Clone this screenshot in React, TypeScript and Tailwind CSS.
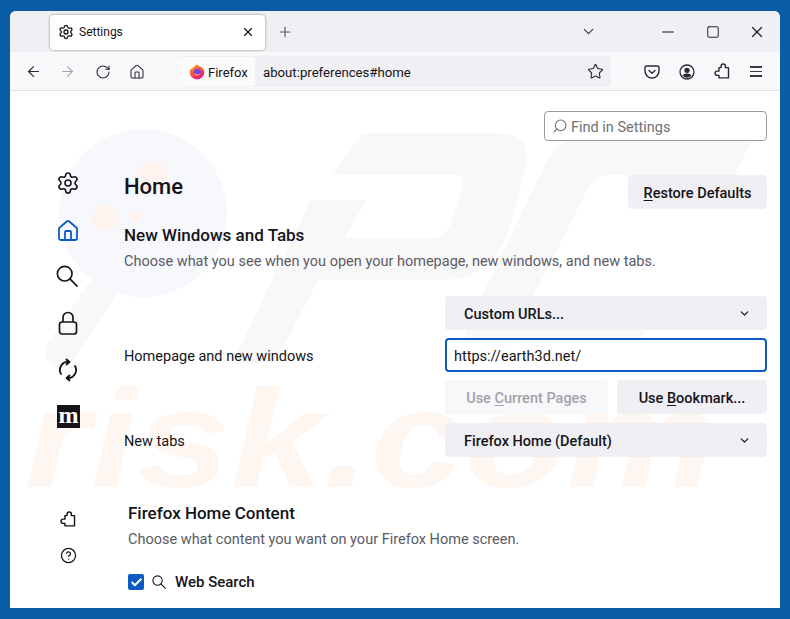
import { ArrowLeft, ArrowRight, ChevronDown, Minus, Plus, RotateCw, Search, Settings, Square, Star, X, House, Check, CircleHelp } from 'lucide-react'

function Puzzle({ className }: { className?: string }) {
  return (
    <svg className={className} viewBox="0 0 24 24" fill="none" stroke="currentColor" strokeWidth={2} strokeLinejoin="round">
      <path d="M11 7.5V5.5a3 3 0 0 1 6 0v2h4.5V22H8v-3.5H5.5a3 3 0 0 1 0-6H8v-5z" transform="translate(-1 -1)" />
    </svg>
  )
}

function SyncIcon({ className }: { className?: string }) {
  return (
    <svg className={className} viewBox="0 0 24 24" fill="none" stroke="currentColor" strokeWidth={1.8} strokeLinecap="round" strokeLinejoin="round">
      <path d="M5 16A8 8 0 0 1 12.5 4" />
      <path d="M19 8A8 8 0 0 1 11.5 20" />
      <path d="M10.5 1.5l3 2.5-3 2.5" fill="currentColor" />
      <path d="M13.5 22.5l-3-2.5 3-2.5" fill="currentColor" />
    </svg>
  )
}

function SearchGlass({ className }: { className?: string }) {
  return (
    <svg className={className} viewBox="0 0 24 24" fill="none" stroke="currentColor" strokeWidth={1.8} strokeLinecap="round">
      <circle cx="9.5" cy="9.5" r="8" />
      <path d="M15.5 15.5L23 23" />
    </svg>
  )
}

function FirefoxLogo() {
  return (
    <svg className="w-[16px] h-[16px]" viewBox="0 0 16 16">
      <defs>
        <linearGradient id="fx" x1="0" y1="0" x2="0.6" y2="1">
          <stop offset="0" stopColor="#ffb71f" />
          <stop offset="0.5" stopColor="#ff5a2c" />
          <stop offset="1" stopColor="#e31587" />
        </linearGradient>
      </defs>
      <path d="M8 15.5A7.2 7.2 0 0 1 .8 8.2C.8 6.6 1.3 5.2 2 4.2c.2.6.5 1 .8 1.2C3.4 3.6 5 3 5.5 2.6c1-.8 1.6-1.6 1.8-2.4 1 1.1 2 1.6 3.6 2.2 2.6 1 4.3 3.2 4.3 5.8A7.2 7.2 0 0 1 8 15.5z" fill="url(#fx)" />
      <circle cx="8.2" cy="8.2" r="3.5" fill="#7542e5" />
      <path d="M4.6 8.4c.3 2 1.8 3.2 3.6 3.2 1.7 0 3.2-1.2 3.5-2.9-.8 1.1-2 1.6-3.4 1.5-1.6-.1-3-.8-3.7-1.8z" fill="#ffa436" />
    </svg>
  )
}

// faint site watermark behind the settings page
function Watermark() {
  return (
    <div className="absolute inset-0 overflow-hidden pointer-events-none">
      <svg className="absolute inset-0 w-full h-full" viewBox="0 0 770 517">
        <path d="M90 202L50 262" stroke="#f8f8f9" strokeWidth="30" strokeLinecap="round" />
        <circle cx="133" cy="122" r="84" fill="#f6f8fb" />
        <circle cx="143" cy="86" r="16" fill="#fef3ef" />
        <circle cx="95" cy="127" r="13" fill="#fef3ef" />
        <circle cx="126" cy="126" r="6" fill="#fef3ef" />
        <g transform="translate(-10 -91)" fill="#f8f8f9">
          <path d="M362 133H495Q535 133 525 170L510 225Q495 280 440 280H318L275 363H232L311 200H367L344 238H430Q445 238 450 225L463 185Q465 175 455 175H333Z" />
          <path d="M755 133H600Q560 133 545 165L470 320Q455 363 500 363H628L650 322H530Q520 322 525 312L590 185Q596 175 610 175H735Z" />
        </g>
      </svg>
      <div className="absolute left-[15px] top-[278px] origin-left scale-x-[1.2] font-['Liberation_Sans',sans-serif] font-bold italic text-[140px] leading-none text-[#fef7f1]">risk.com</div>
    </div>
  )
}

function SelectBox({ label }: { label: string }) {
  return (
    <div className="h-[34px] rounded bg-[#f0f0f4] flex items-center justify-between pl-[19px] pr-[16px] text-[14.5px] font-medium text-[#15141a]">
      <span className="pt-[4px]">{label}</span>
      <ChevronDown className="w-[13px] h-[13px]" strokeWidth={2.2} />
    </div>
  )
}

export default function App() {
  return (
    <div className="w-[790px] h-[619px] bg-[#0a5ca6] pt-[11px] px-[10px] overflow-hidden font-['Roboto',sans-serif] text-[#15141a]">
      <div className="h-[597px] rounded-t-md overflow-hidden bg-white flex flex-col">
        {/* tab strip */}
        <div className="h-[41px] bg-[#f0f0f4] flex items-center pl-[40px] shrink-0">
          <div className="w-[215px] h-[35px] mt-[1px] bg-white rounded shadow-[0_0_3px_rgba(0,0,0,0.4)] flex items-center pl-[8px] pr-[10px]">
            <Settings className="w-[16px] h-[16px]" />
            <span className="ml-[5px] text-[12px] flex-1">Settings</span>
            <X className="w-[14px] h-[14px]" />
          </div>
          <Plus className="ml-[12px] w-[16px] h-[16px] text-[#55555a]" strokeWidth={1.6} />
          <ChevronDown className="ml-[287px] w-[17px] h-[17px] text-[#33333a]" strokeWidth={1.5} />
          <Minus className="ml-[62px] w-[18px] h-[18px]" strokeWidth={1.5} />
          <Square className="ml-[29px] w-[14px] h-[14px]" strokeWidth={1.6} />
          <X className="ml-[28px] w-[18px] h-[18px]" strokeWidth={1.5} />
        </div>

        {/* toolbar */}
        <div className="h-[39px] pt-[1px] bg-[#f9f9fb] border-b border-[#e0e0e6] flex items-center pl-[15px] shrink-0">
          <ArrowLeft className="w-[17px] h-[17px] text-[#2b2a33]" strokeWidth={1.6} />
          <ArrowRight className="ml-[17px] w-[17px] h-[17px] text-[#a5a5ab]" strokeWidth={1.6} />
          <RotateCw className="ml-[19px] w-[16px] h-[16px] text-[#2b2a33]" strokeWidth={1.6} />
          <House className="ml-[18px] w-[16px] h-[16px] text-[#2b2a33]" strokeWidth={1.6} />
          <div className="ml-[35px] w-[431px] h-[31px] bg-[#f0f0f4] rounded flex items-center">
            <div className="w-[75px] h-[29px] bg-[#fbfbfc] rounded flex items-center pl-[9px] gap-[3px] text-[13px]">
              <FirefoxLogo />
              <span className="pt-[2px]">Firefox</span>
            </div>
            <span className="ml-[8px] pt-[2px] text-[13.2px] flex-1">about:preferences#home</span>
            <Star className="mr-[7px] w-[17px] h-[17px] text-[#2b2a33]" strokeWidth={1.6} />
          </div>
          <svg className="ml-[33px] w-[16px] h-[16px] text-[#2b2a33]" viewBox="0 0 16 16" fill="none" stroke="currentColor" strokeWidth="1.4" strokeLinecap="round" strokeLinejoin="round">
            <path d="M2.5 2h11A1.5 1.5 0 0 1 15 3.5V7A7 7 0 0 1 1 7V3.5A1.5 1.5 0 0 1 2.5 2z" />
            <path d="M5 6.5l3 2.8 3-2.8" />
          </svg>
          <svg className="ml-[19px] w-[16px] h-[16px] text-[#2b2a33]" viewBox="0 0 16 16" fill="none">
            <circle cx="8" cy="8" r="7" stroke="currentColor" strokeWidth="1.3" />
            <circle cx="8" cy="6.3" r="2.6" fill="currentColor" />
            <path d="M3.6 11.5C4.8 10 6.3 9.6 8 9.6s3.2.4 4.4 1.9A6 6 0 0 1 8 13.8a6 6 0 0 1-4.4-2.3z" fill="currentColor" />
          </svg>
          <Puzzle className="ml-[19px] w-[17px] h-[17px] text-[#2b2a33]" />
          <div className="ml-[19px] w-[12px] flex flex-col gap-[3px]">
            <div className="h-[1.5px] bg-[#3a3a42]" />
            <div className="h-[1.5px] bg-[#3a3a42]" />
            <div className="h-[1.5px] bg-[#3a3a42]" />
          </div>
        </div>

        {/* page */}
        <div className="relative flex-1 overflow-hidden">
          <Watermark />
          <div className="relative h-full flex">
            <div className="w-[114px] shrink-0 pl-[46px] pt-[80px] flex flex-col text-[#15141a]">
              <Settings className="w-[24px] h-[24px]" strokeWidth={1.6} />
              <House className="mt-[24px] w-[24px] h-[24px] text-[#0b5bc4]" strokeWidth={1.8} />
              <SearchGlass className="mt-[22px] w-[22px] h-[22px]" />
              <svg className="mt-[24px] w-[24px] h-[24px]" viewBox="0 0 24 24" fill="none" stroke="currentColor" strokeWidth="1.7">
                <rect x="3.5" y="11" width="17" height="12" rx="2.5" />
                <path d="M7 11V6.5a5 5 0 0 1 10 0V11" />
              </svg>
              <SyncIcon className="mt-[23px] w-[24px] h-[24px]" />
              <div className="mt-[23px] ml-[1px] w-[23px] h-[23px] bg-[#15141a] text-white flex items-center justify-center font-['Liberation_Serif',serif] font-bold text-[24px] leading-none pb-[3px]">m</div>
              <Puzzle className="mt-[83px] ml-[4px] w-[17px] h-[17px]" />
              <CircleHelp className="mt-[19px] ml-[4px] w-[17px] h-[17px]" strokeWidth={1.8} />
            </div>

            <div className="flex-1 pr-[13px] pt-[20px] min-w-0">
              <div className="ml-auto w-[223px] h-[30px] border border-[#9a9aa0] rounded bg-white flex items-center pl-[7px] gap-[3px] text-[14.5px] text-[#6f6f75]">
                <Search className="w-[16px] h-[16px] -scale-x-100" strokeWidth={1.6} />
                <span className="pt-[4px]">Find in Settings</span>
              </div>

              <div className="mt-[34px] flex items-start justify-between">
                <h1 className="text-[22px] leading-[24px] font-medium">Home</h1>
                <div className="w-[139px] h-[34px] rounded bg-[#f0f0f4] flex items-center justify-center text-[14.5px] font-medium"><span className="pt-[4px]"><u className="underline-offset-2">R</u>estore Defaults</span></div>
              </div>

              <h2 className="mt-[15px] text-[17px] leading-[22px] font-medium">New Windows and Tabs</h2>
              <p className="mt-[6px] text-[14.5px] leading-[20px] text-[#5b5b66]">Choose what you see when you open your homepage, new windows, and new tabs.</p>

              <div className="mt-[24px] ml-auto w-[322px]">
                <SelectBox label="Custom URLs..." />
              </div>
              <div className="mt-[8px] flex items-center justify-between">
                <span className="pt-[4px] text-[14.5px]">Homepage and new windows</span>
                <div className="w-[322px] h-[34px] rounded border-2 border-[#0b5bc4] bg-white flex items-center pl-[7px] text-[14.5px]"><span className="pt-[4px]">https://earth3d.net/</span></div>
              </div>
              <div className="mt-[8px] ml-auto w-[322px] flex justify-between">
                <div className="w-[163px] h-[34px] rounded bg-[#f8f8fa] flex items-center justify-center text-[14.5px] font-medium text-[#a3a3a8]"><span className="pt-[4px]">Use <u className="underline-offset-2">C</u>urrent Pages</span></div>
                <div className="w-[150px] h-[34px] rounded bg-[#f0f0f4] flex items-center justify-center text-[14.5px] font-medium"><span className="pt-[4px]">Use <u className="underline-offset-2">B</u>ookmark...</span></div>
              </div>
              <div className="mt-[9px] flex items-center justify-between">
                <span className="pt-[4px] text-[14.5px]">New tabs</span>
                <div className="w-[322px]"><SelectBox label="Firefox Home (Default)" /></div>
              </div>

              <div className="ml-[4px]">
                <h2 className="mt-[45px] text-[17px] leading-[22px] font-medium">Firefox Home Content</h2>
                <p className="mt-[6px] text-[14.5px] leading-[20px] text-[#5b5b66]">Choose what content you want on your Firefox Home screen.</p>
                <div className="mt-[21px] flex items-center">
                  <div className="w-[16px] h-[16px] rounded-[2px] bg-[#0b5bc4] flex items-center justify-center">
                    <Check className="w-[13px] h-[13px] text-white" strokeWidth={3.5} />
                  </div>
                  <SearchGlass className="ml-[8px] w-[14px] h-[14px]" />
                  <span className="ml-[9px] text-[15px] font-medium">Web Search</span>
                </div>
              </div>
            </div>
          </div>
        </div>
      </div>
    </div>
  )
}
